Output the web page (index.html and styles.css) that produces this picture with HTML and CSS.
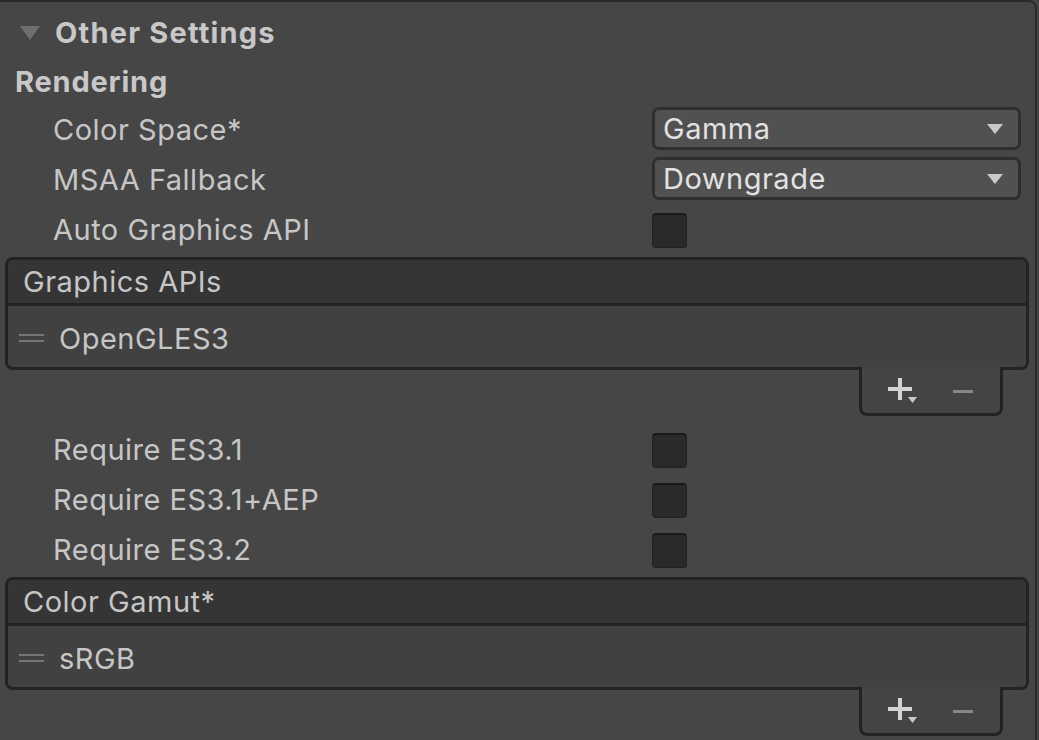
FILE: index.html
```html
<!DOCTYPE html>
<html>
<head>
<meta charset="utf-8">
<link rel="stylesheet" href="styles.css">
</head>
<body>
<div class="panel">
  <div class="foldout">
    <svg class="fold-arrow" width="20" height="16" viewBox="0 0 20 16"><polygon points="0,1 20,1 10,15" fill="#6f6f6f"/></svg>
    <span class="fold-title">Other Settings</span>
  </div>
  <div class="section">Rendering</div>

  <div class="row">
    <span class="label">Color Space*</span>
    <div class="dropdown"><span>Gamma</span><svg class="dd-arrow" width="16" height="10" viewBox="0 0 16 10"><polygon points="0,0 16,0 8,10" fill="#c9c9c9"/></svg></div>
  </div>
  <div class="row">
    <span class="label">MSAA Fallback</span>
    <div class="dropdown"><span>Downgrade</span><svg class="dd-arrow" width="16" height="10" viewBox="0 0 16 10"><polygon points="0,0 16,0 8,10" fill="#c9c9c9"/></svg></div>
  </div>
  <div class="row">
    <span class="label">Auto Graphics API</span>
    <div class="checkbox"></div>
  </div>

  <div class="list">
    <div class="list-head">Graphics APIs</div>
    <div class="list-body">
      <span class="handle"><i></i><i></i></span>
      <span class="item">OpenGLES3</span>
    </div>
  </div>
  <div class="list-foot">
    <svg class="plus" width="30" height="30" viewBox="0 0 30 30"><rect x="0" y="9" width="24" height="4" fill="#d2d2d2"/><rect x="10" y="0" width="4" height="22" fill="#d2d2d2"/><polygon points="20,19 29,19 24.5,25" fill="#c9c9c9"/></svg>
    <span class="minus"></span>
  </div>

  <div class="rows2">
    <div class="row">
      <span class="label">Require ES3.1</span>
      <div class="checkbox"></div>
    </div>
    <div class="row">
      <span class="label">Require ES3.1+AEP</span>
      <div class="checkbox"></div>
    </div>
    <div class="row">
      <span class="label">Require ES3.2</span>
      <div class="checkbox"></div>
    </div>
  </div>

  <div class="list">
    <div class="list-head">Color Gamut*</div>
    <div class="list-body">
      <span class="handle"><i></i><i></i></span>
      <span class="item">sRGB</span>
    </div>
  </div>
  <div class="list-foot">
    <svg class="plus" width="30" height="30" viewBox="0 0 30 30"><rect x="0" y="9" width="24" height="4" fill="#d2d2d2"/><rect x="10" y="0" width="4" height="22" fill="#d2d2d2"/><polygon points="20,19 29,19 24.5,25" fill="#c9c9c9"/></svg>
    <span class="minus"></span>
  </div>
</div>
</body>
</html>
```

FILE: styles.css
```css
html, body {
  margin: 0;
  padding: 0;
  background: #464646;
  width: 1039px;
  height: 740px;
  overflow: hidden;
}
body {
  font-family: Inter, "Noto Sans", sans-serif;
  font-size: 29px;
  letter-spacing: 0.5px;
  color: #c6c6c6;
}
.panel {
  width: 1037px;
  height: 740px;
  box-sizing: border-box;
  border-top: 2px solid #2a2a2a;
  border-right: 2px solid #2a2a2a;
  border-top-right-radius: 8px;
  background: #464646;
}
.foldout {
  height: 50px;
  margin-top: 5px;
  display: flex;
  align-items: center;
  padding-left: 20px;
}
.fold-arrow {
  margin-right: 15px;
  margin-top: 2px;
}
.fold-title {
  font-weight: 700;
  letter-spacing: 1.2px;
  color: #c8c8c8;
}
.section {
  height: 48px;
  display: flex;
  align-items: center;
  padding-left: 15px;
  font-weight: 700;
  letter-spacing: 0.8px;
  color: #c8c8c8;
}
.row {
  height: 50px;
  display: flex;
  align-items: center;
}
.label {
  width: 599px;
  padding-left: 53px;
  flex: none;
  margin-top: -2px;
}
.dropdown {
  width: 369px;
  height: 43px;
  box-sizing: border-box;
  background: #515151;
  border: 3px solid #2e2e2e;
  border-radius: 7px;
  display: flex;
  align-items: center;
  justify-content: space-between;
  padding: 0 15px 0 8px;
  color: #e2e2e2;
  margin-top: -4px;
}
.dd-arrow {
  margin-top: 2px;
}
.checkbox {
  width: 35px;
  height: 35px;
  box-sizing: border-box;
  background: #2a2a2a;
  border: 1px solid #222;
  border-top: 2px solid #191919;
  border-radius: 4px;
}
.list {
  margin: 2px 6px 0 5px;
  border: 3px solid #232323;
  border-radius: 8px;
  overflow: hidden;
}
.list-head {
  height: 43px;
  background: #353535;
  border-bottom: 3px solid #232323;
  display: flex;
  align-items: center;
  padding-left: 15px;
}
.list-body {
  height: 61px;
  background: #414141;
  display: flex;
  align-items: center;
}
.item {
  margin-top: 4px;
}
.handle {
  display: flex;
  flex-direction: column;
  gap: 4px;
  margin-left: 11px;
  margin-right: 15px;
  margin-top: 2px;
}
.handle i {
  display: block;
  width: 25px;
  height: 2px;
  background: #767676;
}
.list-foot {
  width: 144px;
  height: 49px;
  box-sizing: border-box;
  margin: -3px 32px 0 auto;
  position: relative;
  background: #444444;
  border: 3px solid #232323;
  border-top: none;
  border-radius: 0 0 8px 8px;
  display: flex;
  align-items: center;
}
.plus {
  margin-left: 26px;
  margin-top: 6px;
}
.minus {
  width: 20px;
  height: 3px;
  background: #878787;
  margin-left: 35px;
  margin-top: 2px;
}
.rows2 {
  margin-top: 9px;
}
```
